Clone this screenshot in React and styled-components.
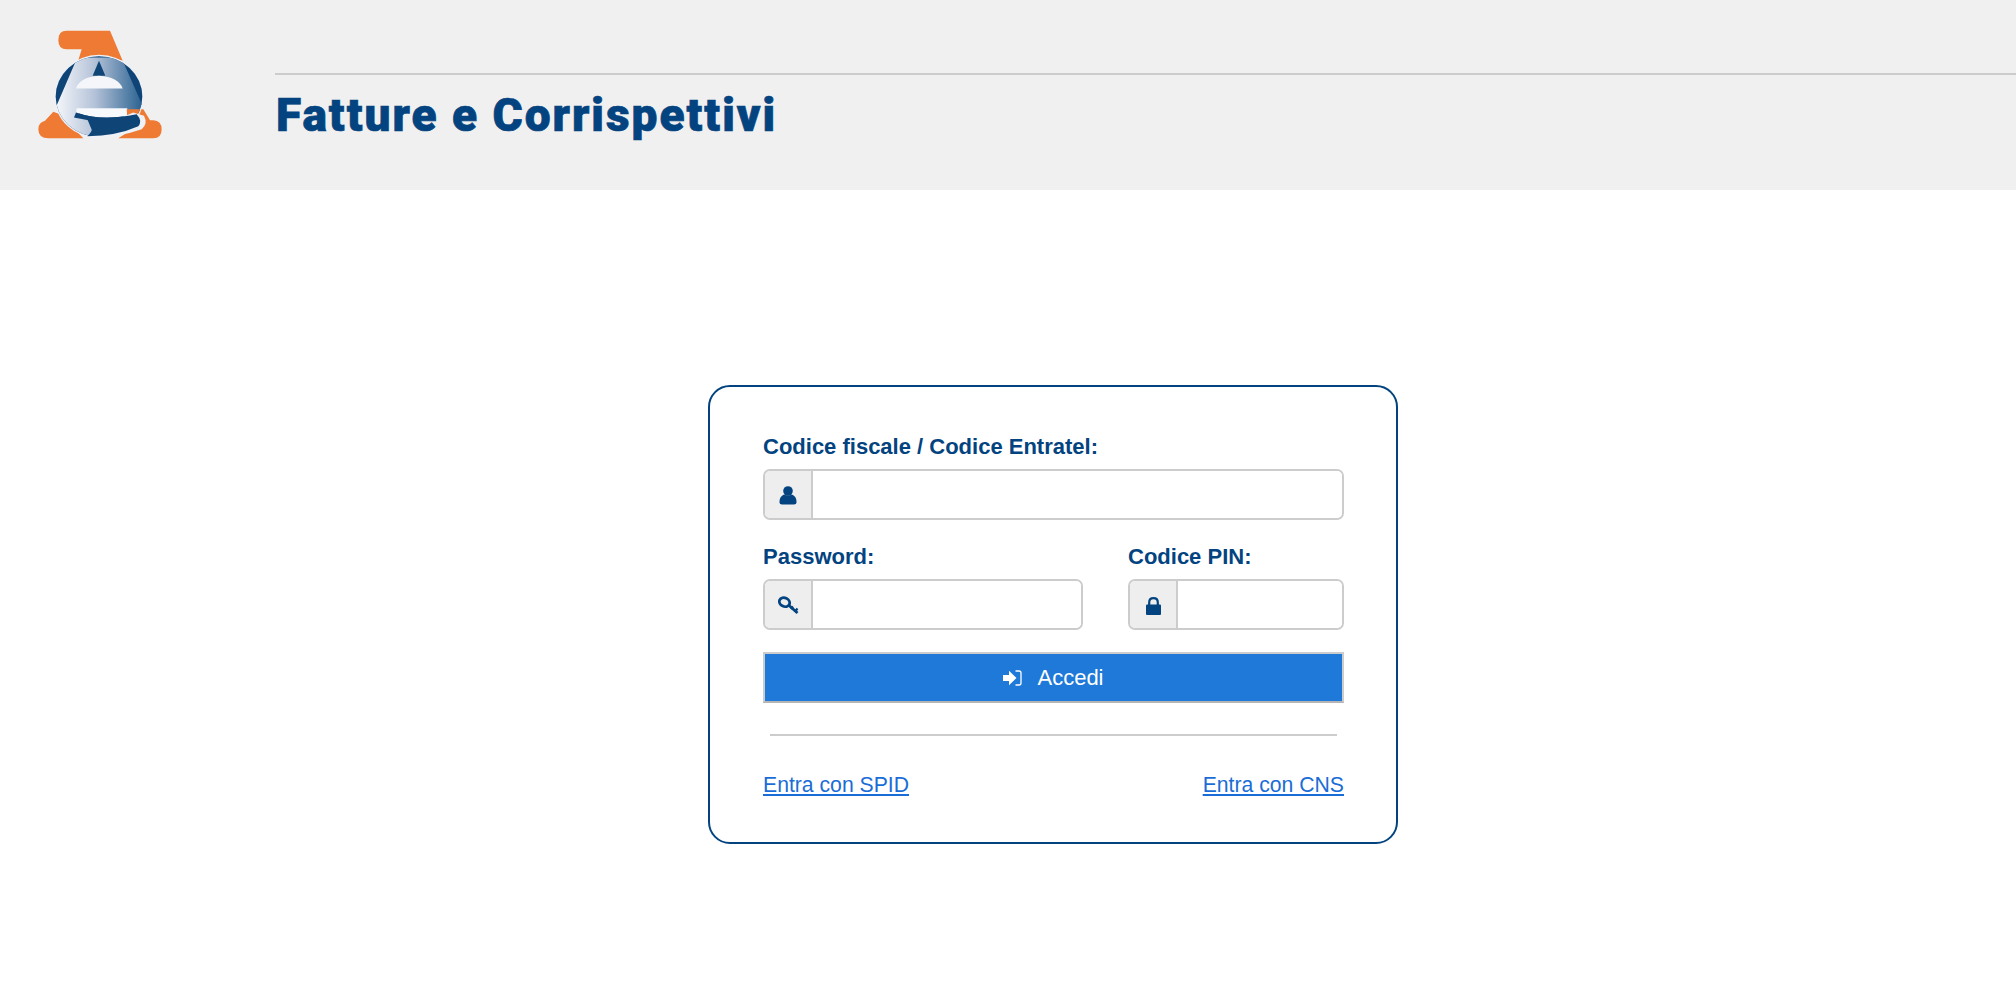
import styled, { createGlobalStyle } from "styled-components";

const GlobalStyle = createGlobalStyle`
  body {
    margin: 0;
    background: #fff;
    font-family: "Liberation Sans", Arial, sans-serif;
  }
`;

const Header = styled.header`
  height: 190px;
  background: #f0f0f0;
  display: flex;
  padding-left: 38px;
  box-sizing: border-box;
`;

const Logo = styled.svg`
  width: 124px;
  height: 109px;
  margin-top: 30px;
  flex-shrink: 0;
`;

const TitleArea = styled.div`
  flex: 1;
  margin-left: 113px;
  margin-top: 73px;
  border-top: 2px solid #ccc;
`;

const Title = styled.h1`
  margin: 10px 0 0 1px;
  font-family: Roboto, "Noto Sans", sans-serif;
  font-weight: 900;
  font-size: 46px;
  line-height: 60px;
  letter-spacing: 2px;
  -webkit-text-stroke: 0.7px #03437f;
  color: #03437f;
`;

const Card = styled.main`
  width: 690px;
  height: 459px;
  box-sizing: border-box;
  margin: 195px 0 0 708px;
  padding: 48px 52px 0 53px;
  border: 2px solid #03437f;
  border-radius: 22px;
  display: flex;
  flex-direction: column;
`;

const Row = styled.div`
  display: flex;
  justify-content: space-between;
  margin-bottom: ${(p) => p.$gap || 0}px;
`;

const Field = styled.label`
  display: block;
  width: ${(p) => p.$width}px;
`;

const LabelText = styled.span`
  display: block;
  font-size: 22px;
  font-weight: bold;
  line-height: 24px;
  margin-bottom: 10px;
  color: #03437f;
`;

const InputGroup = styled.span`
  display: flex;
  height: 51px;
  box-sizing: border-box;
  border: 2px solid #ccc;
  border-radius: 7px;
  overflow: hidden;
`;

const Addon = styled.span`
  width: 46px;
  flex-shrink: 0;
  padding-top: 2px;
  box-sizing: content-box;
  background: #eee;
  border-right: 2px solid #ccc;
  display: flex;
  align-items: center;
  justify-content: center;
  color: #03437f;
`;

const Input = styled.input`
  flex: 1;
  min-width: 0;
  border: 0;
  outline: 0;
  padding: 0 10px;
  background: #fff;
`;

const Submit = styled.button`
  height: 51px;
  box-sizing: border-box;
  margin-top: 22px;
  background: #1e79d9;
  border: 2px solid #ccc;
  border-bottom-color: #b5b5b5;
  color: #fff;
  font-family: inherit;
  font-size: 22px;
  display: flex;
  align-items: center;
  justify-content: center;
  gap: 15px;
  padding: 0;
`;

const Divider = styled.hr`
  height: 2px;
  margin: 31px 7px 36px;
  border: 0;
  background: #ccc;
`;

const Link = styled.a`
  font-size: 21.2px;
  line-height: 26px;
  color: #1a6dd6;
  text-decoration: underline;
`;

function LogoMark() {
  return (
    <Logo viewBox="114 88 372 326" aria-label="Agenzia delle Entrate">
      <defs>
        <linearGradient id="eBody" x1="0" x2="1" y1="0" y2="0">
          <stop offset="0" stopColor="#f6f8fb" />
          <stop offset="0.45" stopColor="#b4c2d8" />
          <stop offset="1" stopColor="#27608f" />
        </linearGradient>
        <clipPath id="disc">
          <ellipse cx="297" cy="287" rx="130" ry="121" />
        </clipPath>
      </defs>
      <path
        fill="#ef7a33"
        d="M200 90H330L368 180Q300 155 235 178L245 145H200Q175 145 175 118Q175 90 200 90Z"
      />
      <path
        fill="#ef7a33"
        d="M160 333L135 360Q115 365 115 385Q115 412 145 412H250L180 340Z"
      />
      <path
        fill="#ef7a33"
        d="M380 325H430L450 358H460Q485 360 485 385Q485 412 460 412H355L420 370Z"
      />
      <ellipse cx="297" cy="287" rx="134" ry="125" fill="#eef1f6" />
      <g clipPath="url(#disc)">
        <rect x="160" y="155" width="280" height="270" fill="#0f4477" />
        <path
          fill="url(#eBody)"
          d="M232 170H364L430 320V330H230Q240 345 262 355L285 410H165V325Z"
        />
        <path fill="#0f4477" d="M297 180L316 225H278Z" />
        <path fill="#f4f6f9" d="M228 263Q240 228 297 225Q355 228 368 263Z" />
        <path fill="#f7f9fb" d="M230 322H382V345Q300 360 228 335Z" />
        <path fill="#ef7a33" d="M380 325H430V340L382 345Z" />
      </g>
      <path
        fill="#eef1f6"
        d="M400 335L432 345Q445 370 425 385Q350 412 262 410L290 380Z"
      />
      <path
        fill="#0f4477"
        d="M222 350L228 335Q300 362 410 340Q428 360 415 376Q350 405 262 406Q290 380 265 358Z"
      />
    </Logo>
  );
}

function UserIcon() {
  return (
    <svg width="18" height="19" viewBox="0 0 18 19">
      <circle cx="9" cy="5" r="4.8" fill="currentColor" />
      <path
        fill="currentColor"
        d="M5 8.500Q9 10.500 13 8.500Q17.500 10.500 17.500 15.500V16.500Q17.500 18.500 15 18.500H3Q.5 18.500 .5 16.500V15.500Q.5 10.500 5 8.500Z"
      />
    </svg>
  );
}

function KeyIcon() {
  return (
    <svg width="21" height="19" viewBox="0 0 21 19" fill="none" stroke="currentColor">
      <ellipse cx="6.500" cy="6.200" rx="5.300" ry="4.300" strokeWidth="2.800" transform="rotate(25 6.500 6.200)" />
      <path strokeWidth="2.800" d="M10.500 9L19.500 17" />
      <path strokeWidth="2.200" d="M15 10.500L13 13M19.500 12.500L17 15.500" />
    </svg>
  );
}

function LockIcon() {
  return (
    <svg width="15" height="18" viewBox="0 0 15 18">
      <path fill="none" stroke="currentColor" strokeWidth="2.200" d="M3.200 8V5.500Q3.200 1.200 7.500 1.200Q11.800 1.200 11.800 5.500V8" />
      <path fill="currentColor" d="M1 7.500H14Q15 7.500 15 8.500V17Q15 18 14 18H1Q0 18 0 17V8.500Q0 7.500 1 7.500Z" />
    </svg>
  );
}

function LoginIcon() {
  return (
    <svg width="19" height="16" viewBox="0 0 19 16">
      <path fill="currentColor" d="M0 5H6V.800L13.500 8L6 15.200V11H0Z" />
      <path fill="none" stroke="currentColor" strokeWidth="1.300" d="M12.500 1H16Q18 1 18 3V13Q18 15 16 15H12.500" />
    </svg>
  );
}

function App() {
  return (
    <>
      <GlobalStyle />
      <Header>
        <LogoMark />
        <TitleArea>
          <Title>Fatture e Corrispettivi</Title>
        </TitleArea>
      </Header>
      <Card>
        <Row $gap={25}>
          <Field $width={581}>
            <LabelText>Codice fiscale / Codice Entratel:</LabelText>
            <InputGroup>
              <Addon>
                <UserIcon />
              </Addon>
              <Input type="text" />
            </InputGroup>
          </Field>
        </Row>
        <Row>
          <Field $width={320}>
            <LabelText>Password:</LabelText>
            <InputGroup>
              <Addon>
                <KeyIcon />
              </Addon>
              <Input type="password" />
            </InputGroup>
          </Field>
          <Field $width={216}>
            <LabelText>Codice PIN:</LabelText>
            <InputGroup>
              <Addon>
                <LockIcon />
              </Addon>
              <Input type="password" />
            </InputGroup>
          </Field>
        </Row>
        <Submit type="button">
          <LoginIcon />
          Accedi
        </Submit>
        <Divider />
        <Row>
          <Link href="#spid">Entra con SPID</Link>
          <Link href="#cns">Entra con CNS</Link>
        </Row>
      </Card>
    </>
  );
}

export default App;
